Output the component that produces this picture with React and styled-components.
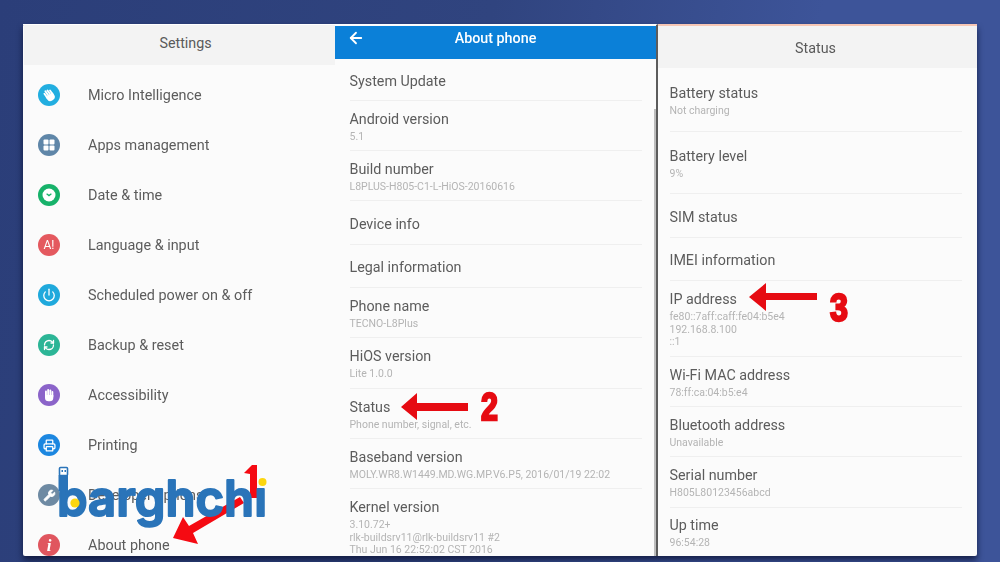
import React from "react";
import styled, { createGlobalStyle } from "styled-components";
import { ArrowLeft, Power, Printer, RefreshCw, Wrench } from "lucide-react";

const Global = createGlobalStyle`
  html, body { margin: 0; padding: 0; }
  body { font-family: Roboto, "Noto Sans", sans-serif; }
`;

const Screen = styled.div`
  position: relative;
  box-sizing: border-box;
  width: 1000px;
  height: 562px;
  overflow: hidden;
  padding: 24px 23px 6px;
  background: linear-gradient(100deg, #2b3e79 0%, #30447f 45%, #3d5499 75%, #3d5499 100%);
`;

const Panel = styled.div`
  display: grid;
  grid-template-columns: 312px 323px 319px;
  height: 532px;
  background: #fbfbfb;
  border-radius: 2px;
  box-shadow: 0 4px 6px rgba(8, 14, 44, 0.75);
  filter: blur(0.35px);
`;

const Column = styled.section`
  position: relative;
  display: flex;
  flex-direction: column;
  height: 532px;
  overflow: hidden;
  min-width: 0;
  box-sizing: border-box;
  border-top: ${(p) => p.$top || "1px solid #fff"};
  border-right: ${(p) => (p.$divider ? "2px solid #5c5c5c" : "none")};
`;

const GreyHeader = styled.header`
  flex: none;
  display: flex;
  align-items: center;
  justify-content: center;
  box-sizing: border-box;
  height: ${(p) => p.$h}px;
  margin: ${(p) => p.$margin || "0"};
  padding: ${(p) => p.$padding || "0"};
  background: #f3f3f3;
  color: #5a5a5a;
  font-size: 14.3px;
`;

const BlueHeader = styled.header`
  flex: none;
  display: grid;
  grid-template-columns: 1fr auto 1fr;
  align-items: center;
  box-sizing: border-box;
  height: 33px;
  padding: 0 12px 9px;
  margin-top: 1px;
  background: #0b80d8;
  color: #fff;
  font-size: 14.3px;
  font-weight: 500;
`;

const MenuRow = styled.div`
  flex: none;
  display: flex;
  align-items: center;
  gap: 28px;
  height: 50px;
  padding-left: 15px;
  color: #5c5c5c;
  font-size: 14.4px;
`;

const MenuList = styled.div`
  display: flex;
  flex-direction: column;
  padding-top: 5px;
`;

const IconDisc = styled.span`
  flex: none;
  display: flex;
  align-items: center;
  justify-content: center;
  width: 22px;
  height: 22px;
  border-radius: 50%;
  background: ${(p) => p.$bg};
  color: #fff;
`;

const InfoGlyph = styled.span`
  font-family: "Liberation Serif", serif;
  font-size: 17px;
  font-style: italic;
  font-weight: 700;
  line-height: 1;
`;

const LangGlyph = styled.span`
  font-size: 12px;
  font-weight: 400;
  line-height: 1;
`;

const InfoRow = styled.div`
  flex: none;
  box-sizing: border-box;
  display: flex;
  flex-direction: column;
  justify-content: center;
  height: ${(p) => p.$h}px;
  margin: ${(p) => p.$margin};
  padding-top: 3px;
  border-bottom: ${(p) => (p.$last ? "none" : "1px solid #efefef")};
`;

const RowTitle = styled.div`
  color: #5c5c5c;
  font-size: 14.3px;
  line-height: 17px;
  white-space: nowrap;
`;

const RowSub = styled.div`
  margin-top: 3px;
  color: #b4b4b4;
  font-size: 10.5px;
  line-height: 12.5px;
  white-space: pre-line;
`;

const Scrollbar = styled.div`
  position: absolute;
  top: 84px;
  right: 0;
  bottom: 0;
  width: 2px;
  background: #bdbdbd;
`;

const Overlay = styled.svg`
  position: absolute;
  inset: 0;
  width: 1000px;
  height: 562px;
  pointer-events: none;
`;

const MarkNumber = styled.text`
  fill: #e60b12;
  stroke: #e60b12;
  stroke-width: 2.4px;
  font-family: "Liberation Sans", sans-serif;
  font-size: 38px;
  font-weight: 700;
`;

const LogoText = styled.text`
  fill: #2a74b9;
  stroke: #2a74b9;
  stroke-width: 2px;
  stroke-linejoin: round;
  font-family: Inter, "Liberation Sans", sans-serif;
  font-size: 50px;
  font-weight: 600;
`;

const HandGlyph = ({ tilt }) => (
  <svg width="14" height="14" viewBox="0 0 14 14" fill="#fff">
    <g transform={`rotate(${tilt} 7 7)`}>
      <rect x="3" y="2.5" width="1.9" height="7" rx="0.9" />
      <rect x="5.2" y="1" width="1.9" height="8" rx="0.9" />
      <rect x="7.4" y="1.5" width="1.9" height="8" rx="0.9" />
      <rect x="9.5" y="3" width="1.8" height="6.5" rx="0.9" />
      <path d="M3 7h8.300v3a3.500 3.500 0 0 1-3.500 3.300H6.500A3.500 3.500 0 0 1 3 10Z" />
    </g>
  </svg>
);

const GridGlyph = () => (
  <svg width="12" height="12" viewBox="0 0 12 12" fill="#fff">
    <rect x="0.5" y="0.5" width="5" height="5" rx="1" />
    <rect x="6.5" y="0.5" width="5" height="5" rx="1" />
    <rect x="0.5" y="6.5" width="5" height="5" rx="1" />
    <rect x="6.5" y="6.5" width="5" height="5" rx="1" />
  </svg>
);

const ClockGlyph = () => (
  <svg width="14" height="14" viewBox="0 0 14 14">
    <circle cx="7" cy="7" r="6.500" fill="#fff" />
    <path d="M4.600 5.800 7 7.600l2.400-1.800" fill="none" stroke="#17b26a" strokeWidth="1.300" />
  </svg>
);

const menu = [
  ["Micro Intelligence", "#22aee0", <HandGlyph key="i" tilt={-35} />],
  ["Apps management", "#5f86a8", <GridGlyph key="i" />],
  ["Date & time", "#17b26a", <ClockGlyph key="i" />],
  ["Language & input", "#e4595f", <LangGlyph key="i">A!</LangGlyph>],
  ["Scheduled power on & off", "#1fa9dc", <Power key="i" size={14} strokeWidth={2.2} />],
  ["Backup & reset", "#2cb596", <RefreshCw key="i" size={12} strokeWidth={2.6} />],
  ["Accessibility", "#8b64c9", <HandGlyph key="i" tilt={0} />],
  ["Printing", "#1c87e0", <Printer key="i" size={13} strokeWidth={2.4} />],
  ["Developer options", "#6e8aa3", <Wrench key="i" size={13} fill="#fff" strokeWidth={1.6} />],
  ["About phone", "#e0565f", <InfoGlyph key="i">i</InfoGlyph>],
];

const about = [
  ["System Update", "", 42],
  ["Android version", "5.1", 50],
  ["Build number", "L8PLUS-H805-C1-L-HiOS-20160616", 50],
  ["Device info", "", 44],
  ["Legal information", "", 43],
  ["Phone name", "TECNO-L8Plus", 50],
  ["HiOS version", "Lite 1.0.0", 51],
  ["Status", "Phone number, signal, etc.", 50],
  ["Baseband version", "MOLY.WR8.W1449.MD.WG.MP.V6.P5, 2016/01/19 22:02", 50],
  ["Kernel version", "3.10.72+\nrlk-buildsrv11@rlk-buildsrv11 #2\nThu Jun 16 22:52:02 CST 2016", 75, true],
];

const status = [
  ["Battery status", "Not charging", 64],
  ["Battery level", "9%", 62],
  ["SIM status", "", 44],
  ["IMEI information", "", 43],
  ["IP address", "fe80::7aff:caff:fe04:b5e4\n192.168.8.100\n::1", 76],
  ["Wi-Fi MAC address", "78:ff:ca:04:b5:e4", 50],
  ["Bluetooth address", "Unavailable", 50],
  ["Serial number", "H805L80123456abcd", 51],
  ["Up time", "96:54:28", 48, true],
];

const Rows = ({ items, margin }) =>
  items.map(([title, sub, h, last]) => (
    <InfoRow key={title} $h={h} $margin={margin} $last={last}>
      <RowTitle>{title}</RowTitle>
      {sub && <RowSub>{sub}</RowSub>}
    </InfoRow>
  ));

export default function App() {
  return (
    <Screen>
      <Global />
      <Panel>
        <Column>
          <GreyHeader $h={40} $margin="0 0 0 1px" $padding="0 0 4px 12px">Settings</GreyHeader>
          <MenuList>
            {menu.map(([label, bg, icon]) => (
              <MenuRow key={label}>
                <IconDisc $bg={bg}>{icon}</IconDisc>
                {label}
              </MenuRow>
            ))}
          </MenuList>
        </Column>
        <Column $divider>
          <BlueHeader>
            <ArrowLeft size={18} strokeWidth={2.4} />
            About phone
            <span />
          </BlueHeader>
          <Rows items={about} margin="0 14px 0 14.5px" />
          <Scrollbar />
        </Column>
        <Column $top="2px solid #f6c6b4">
          <GreyHeader $h={42} $padding="2px 4px 0 0">Status</GreyHeader>
          <Rows items={status} margin="0 15px 0 11.5px" />
        </Column>
      </Panel>
      <Overlay viewBox="0 0 1000 562">
        <path d="M401 407 417 393V403H468V411H417V420Z" fill="#e60b12" />
        <path d="M749 297 766 283V293H817V300H766V311Z" fill="#e60b12" />
        <g transform="translate(481 420) scale(.8 1)"><MarkNumber>2</MarkNumber></g>
        <g transform="translate(830 321) scale(.85 1)"><MarkNumber>3</MarkNumber></g>
        <path d="M173 538 183 517 189 526 240 497 244 503 193 533 198 544Z" fill="#f50a12" />
        <path d="M244 473 252 465H257V498H250V474Z" fill="#f50a12" />
        <defs>
          <clipPath id="logo-no-dot">
            <path d="M0 440H250V486H280V562H0Z" />
          </clipPath>
        </defs>
        <g clipPath="url(#logo-no-dot)">
          <LogoText x="57" y="516" textLength="210" lengthAdjust="spacingAndGlyphs">barghchi</LogoText>
        </g>
        <rect x="59.500" y="467.500" width="8" height="8" rx="1" fill="#fff" stroke="#2a74b9" strokeWidth="1.600" />
        <path d="M61.500 470h1.500v2h-1.500zM64.500 470H66v2h-1.500z" fill="#2a74b9" />
        <rect x="58.500" y="475" width="9.500" height="16" fill="#2a74b9" />
        <circle cx="75" cy="503" r="4.600" fill="#fcd60f" />
        <circle cx="262.500" cy="482" r="4" fill="#fcd60f" />
      </Overlay>
    </Screen>
  );
}
